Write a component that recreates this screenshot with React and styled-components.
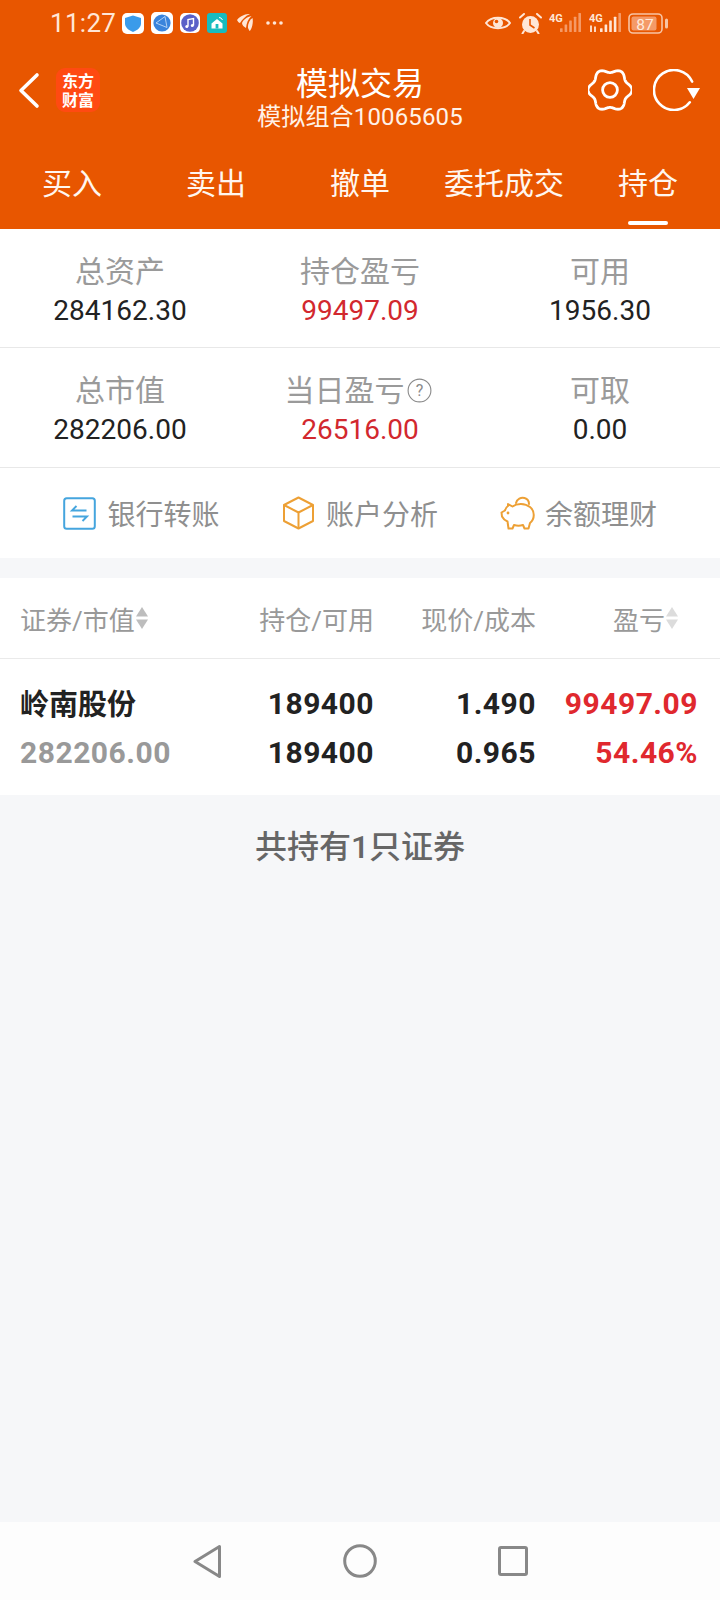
import React from "react";
import styled, { createGlobalStyle } from "styled-components";

const FONT = `Roboto, "Noto Sans CJK SC", sans-serif`;

const GlobalStyle = createGlobalStyle`
  html, body {
    margin: 0;
    padding: 0;
    background: #f6f7f9;
  }
  * {
    box-sizing: border-box;
  }
`;

const Page = styled.div`
  width: 720px;
  height: 1600px;
  display: flex;
  flex-direction: column;
  background: #f6f7f9;
  font-family: ${FONT};
  overflow: hidden;
`;

const Header = styled.header`
  background: #e85600;
  color: #fff;
  height: 229px;
  display: flex;
  flex-direction: column;
`;

const StatusBar = styled.div`
  height: 46px;
  display: flex;
  align-items: center;
  justify-content: space-between;
  padding: 0 51px 0 50px;
  color: #ffe6d6;
`;

const StatusGroup = styled.div`
  display: flex;
  align-items: center;
  gap: ${(p) => p.$gap}px;
`;

const Clock = styled.span`
  font-size: 26px;
  width: 65px;
  letter-spacing: 0.3px;
  white-space: nowrap;
`;

const NavBar = styled.div`
  height: 100px;
  padding-top: 20px;
  display: grid;
  grid-template-columns: 1fr auto 1fr;
  align-items: start;
`;

const NavLeft = styled.div`
  display: flex;
  align-items: center;
  padding: 2px 0 0 17px;
  gap: 16px;
`;

const NavRight = styled.div`
  display: flex;
  align-items: center;
  justify-content: flex-end;
  padding: 3px 20px 0 0;
  gap: 21px;
`;

const Logo = styled.div`
  width: 44px;
  height: 44px;
  border-radius: 9px;
  background: #ff4a12;
  color: #fff;
  font-family: "Noto Sans CJK SC", serif;
  font-weight: 700;
  font-size: 16px;
  line-height: 19px;
  text-align: center;
  display: flex;
  align-items: center;
  justify-content: center;
`;

const TitleBlock = styled.div`
  text-align: center;
`;

const Title = styled.div`
  font-size: 32px;
  line-height: 36px;
  color: #fff;
`;

const SubTitle = styled.div`
  font-size: 24px;
  line-height: 30px;
  letter-spacing: 0.15px;
  color: #fff2e8;
`;

const Tabs = styled.div`
  flex: 1;
  display: grid;
  grid-template-columns: repeat(5, 1fr);
`;

const Tab = styled.div`
  position: relative;
  font-size: 30px;
  line-height: 76px;
  text-align: center;
  color: #fff6ef;

  ${(p) =>
    p.$active &&
    `
    &::after {
      content: "";
      position: absolute;
      left: 52px;
      bottom: 4px;
      width: 40px;
      height: 4px;
      border-radius: 2px;
      background: #fff;
    }
  `}
`;

const Panel = styled.section`
  background: #fff;
`;

const StatRow = styled.div`
  display: grid;
  grid-template-columns: repeat(3, 1fr);
  height: ${(p) => p.$height}px;
  padding-top: 22px;
  border-bottom: 1px solid #e8e8e8;
`;

const Stat = styled.div`
  text-align: center;
`;

const StatLabel = styled.div`
  font-size: 30px;
  line-height: 41px;
  color: #9a9a9a;
  display: flex;
  align-items: center;
  justify-content: center;
  gap: 2px;
  padding-right: ${(p) => p.$pr || 0}px;
`;

const StatValue = styled.div`
  font-size: 28px;
  line-height: 38px;
  color: ${(p) => (p.$red ? "#d2282e" : "#222")};
`;

const Links = styled.div`
  height: 90px;
  display: grid;
  grid-template-columns: repeat(3, 218.5px);
  justify-content: center;
  justify-items: center;
  align-items: center;
`;

const LinkItem = styled.div`
  display: flex;
  align-items: center;
  gap: ${(p) => p.$gap || 11}px;
  font-size: 28px;
  color: #8f8f8f;
`;

const TablePanel = styled.section`
  background: #fff;
  margin-top: 20px;
`;

const HeadRow = styled.div`
  display: grid;
  grid-template-columns: 1fr 162px 162px 162px;
  height: 81px;
  align-items: center;
  padding: 0 22px 0 20px;
  border-bottom: 1px solid #eaeaea;
  font-size: 26px;
  color: #999;
`;

const HeadCell = styled.div`
  display: flex;
  align-items: center;
  justify-content: ${(p) => (p.$left ? "flex-start" : "flex-end")};
  padding-right: ${(p) => p.$pr || 0}px;
`;

const Rows = styled.div`
  height: 136px;
  padding: 20px 22px 0 20px;
  display: grid;
  grid-template-columns: 1fr 162px 162px 162px;
  grid-auto-rows: 49px;
  align-items: center;
  font-size: 30px;
  font-weight: 700;
  letter-spacing: 0.5px;
  color: #222;
`;

const Cell = styled.div`
  text-align: ${(p) => (p.$left ? "left" : "right")};
  color: ${(p) => p.$color || "inherit"};
`;

const NameCell = styled.div`
  font-size: 29px;
  letter-spacing: 0;
  padding-bottom: 3px;
`;

const Footnote = styled.div`
  flex: 1;
  padding-top: 28px;
  font-size: 32px;
  line-height: 48px;
  font-weight: 500;
  text-align: center;
  color: #666;
`;

const BottomNav = styled.nav`
  height: 78px;
  background: #fdfdfd;
  display: flex;
  align-items: center;
  justify-content: center;
  gap: 121px;
`;

const Svg = styled.svg`
  display: block;
  flex: none;
  margin-left: ${(p) => p.$ml || 0}px;
`;

function gearPath() {
  const pts = [];
  for (let i = 0; i < 180; i++) {
    const a = (i / 180) * Math.PI * 2;
    const r = 19.4 + 2 * Math.cos(6 * a);
    const x = 22 + r * 1.03 * Math.cos(a);
    const y = 21 + r * Math.sin(a);
    pts.push(`${x.toFixed(2)} ${y.toFixed(2)}`);
  }
  return `M${pts.join("L")}Z`;
}

const Gear = () => (
  <Svg width="44" height="42" viewBox="0 0 44 42" fill="none" stroke="#fff" strokeWidth="2.8">
    <path d={gearPath()} strokeLinejoin="round" />
    <circle cx="22" cy="21" r="7.4" />
  </Svg>
);

const Refresh = () => (
  <Svg width="47" height="42" viewBox="0 0 47 42" fill="none">
    <path d="M39.1 12.55 A20 20 0 1 0 36.76 33.3" stroke="#fff" strokeWidth="2.6" strokeLinecap="round" />
    <path d="M34 19 H47 L40.5 30 Z" fill="#fff" />
  </Svg>
);

const Back = () => (
  <Svg width="23" height="37" viewBox="0 0 23 37" fill="none">
    <path d="M20 3 L4 18.5 L20 34" stroke="#fff" strokeWidth="3.6" strokeLinecap="round" strokeLinejoin="round" />
  </Svg>
);

const Shield = () => (
  <Svg width="22" height="21" viewBox="0 0 22 21">
    <rect width="22" height="21" rx="5" fill="#fff" />
    <path d="M11 2.500 L19 5 V10.500 C19 14.500 15 17.500 11 19 C7 17.500 3 14.500 3 10.500 V5 Z" fill="#3a9bea" />
  </Svg>
);

const Browser = () => (
  <Svg width="22" height="22" viewBox="0 0 22 22">
    <rect width="22" height="22" rx="5" fill="#fff" />
    <circle cx="11" cy="11" r="8.6" fill="#3a84dc" />
    <path d="M14 4.500 L5 11 L16 15.500 Z" fill="none" stroke="#cfe4fb" strokeWidth="0.8" />
  </Svg>
);

const Music = () => (
  <Svg width="20" height="20" viewBox="0 0 20 20">
    <rect width="20" height="20" rx="5" fill="#fff" />
    <circle cx="10" cy="10" r="8.800" fill="#5a60c8" />
    <path d="M8 13.500 V6.500 L13.500 5.500 V12.500" fill="none" stroke="#fff" strokeWidth="1.400" />
    <circle cx="6.800" cy="13.600" r="1.500" fill="#fff" />
    <circle cx="12.300" cy="12.600" r="1.500" fill="#fff" />
  </Svg>
);

const HomeApp = () => (
  <Svg width="20" height="20" viewBox="0 0 20 20">
    <rect width="20" height="20" rx="3" fill="#17bcbf" />
    <path d="M10 6 L15.500 10.500 V15.500 H4.500 V10.500 Z" fill="#fff" />
    <rect x="8.600" y="11" width="2.800" height="4.500" fill="#17bcbf" />
    <path d="M12 4.500 Q14.500 4.500 15.500 7" fill="none" stroke="#fff" strokeWidth="1" />
  </Svg>
);

const Banana = () => (
  <Svg $ml={3} width="16" height="18" viewBox="0 0 16 18" fill="#ffe6d6">
    <path d="M0 6 C4 1 9 0 13 0 C8 2 5 6 3 9 C2 9 1 8 0 6 Z" />
    <path d="M5 9 C6 6 10 3 14.500 2 C11 5 9.500 9 9 14 C7 13 5 11 5 9 Z" />
    <path d="M11 14 C10.500 10 12.500 6 15.500 4 C16.500 8 15 15 12.500 17 Z" />
  </Svg>
);

const Dots = () => (
  <Svg $ml={6} width="17" height="4" viewBox="0 0 17 4" fill="#ffe6d6">
    <circle cx="2" cy="2" r="1.800" />
    <circle cx="8.500" cy="2" r="1.800" />
    <circle cx="15" cy="2" r="1.800" />
  </Svg>
);

const Eye = () => (
  <Svg width="26" height="16" viewBox="0 0 26 16">
    <path d="M1 8 C6 1 20 1 25 8 C20 15 6 15 1 8 Z" fill="none" stroke="#ffe6d6" strokeWidth="2" />
    <circle cx="13" cy="8" r="5" fill="#ffe6d6" />
    <circle cx="11.500" cy="6.500" r="1.800" fill="#e85600" />
  </Svg>
);

const Alarm = () => (
  <Svg width="23" height="21" viewBox="0 0 23 21">
    <circle cx="11.500" cy="11.500" r="8.500" fill="#ffe6d6" />
    <path d="M11 6 V12 L15.500 15" fill="none" stroke="#e85600" strokeWidth="1.600" />
    <path d="M1 4.500 L5 1 M22 4.500 L18 1 M5 18 L3.500 20.500 M18 18 L19.500 20.500" stroke="#ffe6d6" strokeWidth="2" strokeLinecap="round" />
  </Svg>
);

const Signal = ({ level, arrows }) => (
  <Svg width="32" height="22" viewBox="0 0 32 22">
    <text x="0" y="9.500" fontSize="11" fontWeight="700" fill="#ffe6d6" fontFamily="Roboto, sans-serif">
      4G
    </text>
    {arrows && <path d="M2 13.500 V20 M6 14.500 V20" stroke="#ffe6d6" strokeWidth="1.800" />}
    {[0, 1, 2, 3, 4].map((i) => (
      <rect
        key={i}
        x={11 + i * 4.600}
        y={20 - (i + 1) * 3.800}
        width="2.600"
        height={(i + 1) * 3.800}
        rx="0.500"
        fill={i < level ? "#ffe6d6" : "#f59a66"}
      />
    ))}
  </Svg>
);

const Battery = () => (
  <Svg width="41" height="21" viewBox="0 0 41 21">
    <rect x="1" y="1" width="33" height="19" rx="4" fill="none" stroke="#f7c4a4" strokeWidth="1.600" />
    <rect x="3.500" y="3.500" width="25" height="14" rx="2" fill="#f49a68" />
    <text x="17" y="16.500" textAnchor="middle" fontSize="15.500" fill="#ffeadd" fontFamily="Roboto, sans-serif">
      87
    </text>
    <rect x="37" y="5.500" width="3" height="10" rx="1.500" fill="#f7c4a4" />
  </Svg>
);

const Help = () => (
  <Svg width="25" height="25" viewBox="0 0 25 25">
    <circle cx="12.500" cy="12.500" r="11.400" fill="none" stroke="#8a8a8a" strokeWidth="1.100" />
    <text x="12.500" y="18" textAnchor="middle" fontSize="16" fill="#8a8a8a" fontFamily="Roboto, sans-serif">
      ?
    </text>
  </Svg>
);

const Transfer = () => (
  <Svg width="33" height="33" viewBox="0 0 33 33" fill="none" stroke="#45a5de">
    <rect x="1.200" y="1.200" width="30.600" height="30.600" rx="2.500" strokeWidth="2" />
    <path d="M23.500 13.500 H9 L13.500 9" strokeWidth="1.900" />
    <path d="M9.500 19.500 H24 L19.500 24" strokeWidth="1.900" />
  </Svg>
);

const Cube = () => (
  <Svg width="33" height="34" viewBox="0 0 33 34" fill="none" stroke="#eda035" strokeWidth="2" strokeLinejoin="round">
    <path d="M16.500 1.500 L31 9 V25 L16.500 32.500 L2 25 V9 Z" />
    <path d="M2 9 L16.500 16.500 L31 9 M16.500 16.500 V32.500" />
  </Svg>
);

const Piggy = () => (
  <Svg width="36" height="34" viewBox="0 0 36 34" fill="none" stroke="#eda035" strokeWidth="2" strokeLinecap="round" strokeLinejoin="round">
    <path d="M16 7 C17 3 21 1 24.500 2 C28 3 29 6 29 8" />
    <path d="M8 8 L12.500 10.500 C17 7 25 7 30 11 C35 15 35 23 30 27 L28.500 32.500 H24.500 L23 29 C20 30 17 30 14 29 L12.500 32.500 H8.500 L7.500 25.500 C5 24.500 3 22.500 2 20.500 L1.500 16.500 L5 14.500 C5.500 12.500 6.500 11 8 10 Z" />
    <circle cx="8" cy="17" r="1.400" fill="#eda035" stroke="none" />
  </Svg>
);

const SortArrows = ({ color }) => (
  <Svg width="14" height="24" viewBox="0 0 14 24" fill={color}>
    <path d="M7 1 L13 10.500 H1 Z" />
    <path d="M7 23 L13 13.500 H1 Z" />
  </Svg>
);

const NavBack = () => (
  <Svg width="29" height="35" viewBox="0 0 29 35" fill="none" stroke="#888" strokeWidth="3" strokeLinejoin="round">
    <path d="M26.500 2.500 V32.500 L2 17.500 Z" />
  </Svg>
);

const NavHome = () => (
  <Svg width="34" height="34" viewBox="0 0 34 34" fill="none" stroke="#888" strokeWidth="3">
    <circle cx="17" cy="17" r="15.300" />
  </Svg>
);

const NavRecent = () => (
  <Svg width="30" height="30" viewBox="0 0 30 30" fill="none" stroke="#888" strokeWidth="3" strokeLinejoin="round">
    <rect x="1.500" y="1.500" width="27" height="27" rx="1.500" />
  </Svg>
);

const TABS = ["买入", "卖出", "撤单", "委托成交", "持仓"];

export default function App() {
  return (
    <Page>
      <GlobalStyle />
      <Header>
        <StatusBar>
          <StatusGroup $gap={7}>
            <Clock>11:27</Clock>
            <Shield />
            <Browser />
            <Music />
            <HomeApp />
            <Banana />
            <Dots />
          </StatusGroup>
          <StatusGroup $gap={7.5}>
            <Eye />
            <Alarm />
            <Signal level={0} />
            <Signal level={4} arrows />
            <Battery />
          </StatusGroup>
        </StatusBar>
        <NavBar>
          <NavLeft>
            <Back />
            <Logo>
              东方
              <br />
              财富
            </Logo>
          </NavLeft>
          <TitleBlock>
            <Title>模拟交易</Title>
            <SubTitle>模拟组合10065605</SubTitle>
          </TitleBlock>
          <NavRight>
            <Gear />
            <Refresh />
          </NavRight>
        </NavBar>
        <Tabs>
          {TABS.map((t, i) => (
            <Tab key={t} $active={i === 4}>
              {t}
            </Tab>
          ))}
        </Tabs>
      </Header>

      <Panel>
        <StatRow $height={119}>
          <Stat>
            <StatLabel>总资产</StatLabel>
            <StatValue>284162.30</StatValue>
          </Stat>
          <Stat>
            <StatLabel>持仓盈亏</StatLabel>
            <StatValue $red>99497.09</StatValue>
          </Stat>
          <Stat>
            <StatLabel>可用</StatLabel>
            <StatValue>1956.30</StatValue>
          </Stat>
        </StatRow>
        <StatRow $height={120}>
          <Stat>
            <StatLabel>总市值</StatLabel>
            <StatValue>282206.00</StatValue>
          </Stat>
          <Stat>
            <StatLabel $pr={4}>
              当日盈亏
              <Help />
            </StatLabel>
            <StatValue $red>26516.00</StatValue>
          </Stat>
          <Stat>
            <StatLabel>可取</StatLabel>
            <StatValue>0.00</StatValue>
          </Stat>
        </StatRow>
        <Links>
          <LinkItem>
            <Transfer />
            银行转账
          </LinkItem>
          <LinkItem>
            <Cube />
            账户分析
          </LinkItem>
          <LinkItem $gap={9}>
            <Piggy />
            余额理财
          </LinkItem>
        </Links>
      </Panel>

      <TablePanel>
        <HeadRow>
          <HeadCell $left>
            证券/市值
            <SortArrows color="#bdbdbd" />
          </HeadCell>
          <HeadCell>持仓/可用</HeadCell>
          <HeadCell>现价/成本</HeadCell>
          <HeadCell $pr={19}>
            盈亏
            <SortArrows color="#dcdcdc" />
          </HeadCell>
        </HeadRow>
        <Rows>
          <NameCell>岭南股份</NameCell>
          <Cell>189400</Cell>
          <Cell>1.490</Cell>
          <Cell $color="#e0282e">99497.09</Cell>
          <Cell $left $color="#999">
            282206.00
          </Cell>
          <Cell>189400</Cell>
          <Cell>0.965</Cell>
          <Cell $color="#e0282e">54.46%</Cell>
        </Rows>
      </TablePanel>

      <Footnote>共持有1只证券</Footnote>

      <BottomNav>
        <NavBack />
        <NavHome />
        <NavRecent />
      </BottomNav>
    </Page>
  );
}
